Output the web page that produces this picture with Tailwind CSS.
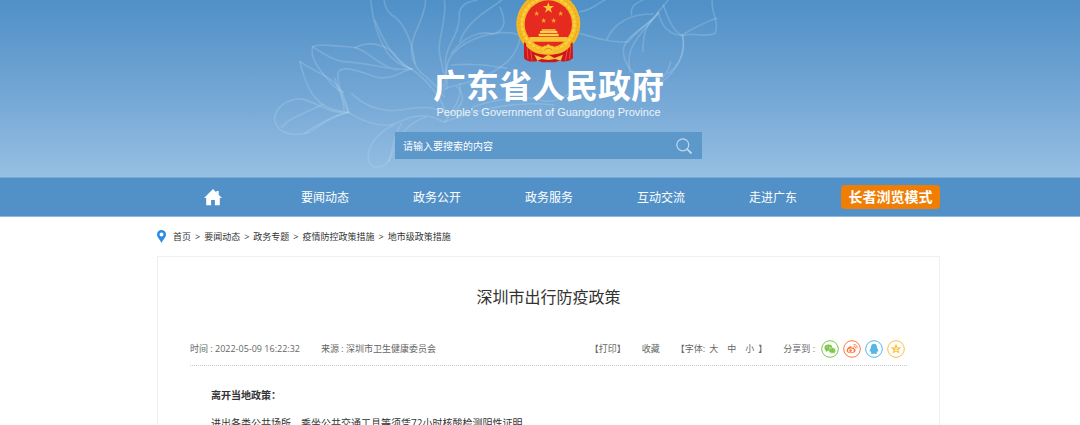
<!DOCTYPE html>
<html lang="zh-CN">
<head>
  <meta charset="UTF-8" />
  <meta name="viewport" content="width=device-width, initial-scale=1.0"/>
  <title>深圳市出行防疫政策</title>
  <script src="https://cdn.jsdelivr.net/npm/@tailwindcss/browser@4"></script>
</head>
<body class="bg-white text-[#444] font-['Open_Sans','Noto_Sans_CJK_SC',sans-serif]">

  <!-- Header -->
  <header class="relative overflow-hidden bg-linear-to-b from-[#4f90c7] via-[#71a5d4] to-[#96bfe3] border-b border-[#78aad6] pl-[17px]">
    <!-- Flower line drawing -->
    <svg class="absolute top-0 left-1/2 -ml-[280px] w-[460px] h-[178px]" viewBox="0 0 1380 534" fill="none" stroke="#b9d8f0" stroke-opacity=".26" stroke-width="5" stroke-linecap="round" aria-hidden="true">
      <path d="M332 0C338 70 355 115 380 155C400 185 425 198 455 207"/>
      <path d="M345 62C370 120 400 180 447 205"/>
      <path d="M372 0C375 25 390 45 410 55C440 85 458 140 465 190"/>
      <path d="M497 0C495 60 450 105 455 155C455 180 468 200 480 215C505 235 530 260 552 290"/>
      <path d="M553 0C562 55 535 110 538 150C540 185 550 205 556 235"/>
      <path d="M652 0C620 5 595 20 598 50C600 95 565 130 558 170C552 205 565 225 560 265"/>
      <path d="M725 0C695 25 620 60 600 125"/>
      <path d="M720 22C735 55 742 90 700 102C660 90 610 110 575 160"/>
      <path d="M780 105C720 85 620 110 575 165C555 190 560 225 552 260"/>
      <path d="M780 115C770 170 730 205 660 235C610 255 570 255 550 270"/>
      <path d="M575 195C640 190 680 195 740 205"/>
      <path d="M455 207C400 215 340 190 250 185C215 180 180 155 158 140C175 128 250 140 285 143C330 155 350 195 410 210"/>
      <path d="M285 143C330 120 385 135 410 170C425 190 440 200 455 207"/>
      <path d="M158 140C150 170 170 200 205 240C220 262 235 270 250 277"/>
      <path d="M120 185C130 230 150 290 190 315C215 330 240 335 265 337"/>
      <path d="M120 185C160 215 215 225 245 275C255 300 262 315 265 337"/>
      <path d="M225 235C230 265 250 285 252 330"/>
      <path d="M265 337C240 280 230 240 235 215C255 195 300 215 350 232C400 240 425 212 455 207"/>
      <path d="M265 337C200 345 150 290 110 297C65 305 38 335 45 365C58 405 105 408 145 398C175 385 210 345 265 337"/>
      <path d="M65 382C90 350 150 335 190 312"/>
      <path d="M265 337C230 345 165 375 135 400"/>
      <path d="M265 337C310 365 350 380 390 375C435 365 440 345 500 348C530 350 545 368 555 365"/>
      <path d="M275 280C310 315 350 330 395 332C450 330 500 310 545 335"/>
      <path d="M455 207C500 240 545 290 560 345"/>
      <path d="M400 375C350 400 320 440 325 480C335 510 365 505 385 485C415 440 410 380 500 350"/>
      <path d="M425 370C400 405 400 450 385 485"/>
      <path d="M590 260C620 285 610 315 575 340C565 350 562 358 555 365"/>
      <path d="M600 250C605 290 590 320 560 350"/>
      <path d="M640 320C700 300 780 285 840 300C870 310 900 300 930 280"/>
      <path d="M555 365C660 330 760 300 880 315"/>
      <path d="M960 100C1010 115 1060 130 1105 125C1130 90 1180 65 1195 35C1210 20 1215 10 1225 0"/>
      <path d="M960 35C1000 30 1010 10 1035 0"/>
      <path d="M1040 118C1060 75 1105 40 1180 42"/>
      <path d="M1115 45C1110 20 1125 10 1150 0"/>
      <path d="M1195 38C1165 80 1095 105 1090 150C1090 185 1110 210 1135 235"/>
      <path d="M1195 38C1160 90 1090 130 1110 215"/>
      <path d="M1195 38C1205 80 1230 105 1268 107C1280 160 1250 215 1200 250"/>
      <path d="M1268 107C1275 150 1265 190 1225 220"/>
      <path d="M1210 15C1225 60 1240 95 1268 107C1300 95 1340 115 1365 100C1380 70 1350 30 1357 0"/>
      <path d="M1370 55C1340 65 1300 85 1265 105"/>
      <path d="M1175 60C1150 90 1150 120 1148 155"/>
      <path d="M1232 185C1225 215 1215 230 1190 250"/>
    </svg>

    <div class="relative flex flex-col items-center pb-[18px]">
      <!-- National emblem -->
      <svg class="w-[66px] h-[63px]" viewBox="30 0 198 189" aria-hidden="true">
        <circle cx="127" cy="72" r="96" fill="#f3b824"/>
        <circle cx="127" cy="72" r="88" fill="none" stroke="#e9a91d" stroke-width="4" stroke-dasharray="5 6"/>
        <circle cx="127" cy="72" r="79" fill="none" stroke="#fbd042" stroke-width="7" stroke-dasharray="11 4"/>
        <circle cx="127" cy="72" r="71" fill="#e62a20"/>
        <path d="M54 126C75 142 90 152 105 158L150 158C168 152 182 142 200 126L201 174C190 186 170 186 160 182L147 187H108L95 182C82 187 62 186 54 174Z" fill="#cc1720"/>
        <path d="M63 140L66 178M74 147L78 182M185 145L178 182M194 138L191 177" stroke="#f04a3a" stroke-width="3"/>
        <path d="M71 111H184L187 125H68Z" fill="#f8c537"/>
        <path d="M98 101H158V109H98ZM102 93H154V99H102ZM107 88H149V92H107Z" fill="#fbd04a"/>
        <path d="M62 128C85 146 108 150 127 150S170 146 192 128L194 137C178 158 155 164 127 164S78 158 60 137Z" fill="#f6bd26"/>
        <path d="M108 144L114 137H120L127 132L134 137H140L146 144L142 158H112Z" fill="#f9c934"/>
        <path d="M115 152C118 143 136 143 139 152" fill="none" stroke="#d9921a" stroke-width="3"/>
        <path d="M85 164L110 174L127 164L145 174L171 164L164 182L148 177L127 180L106 177L94 182Z" fill="#f8c537"/>
        <path d="M127 6L131 18H144L134 26L138 38L127 31L117 38L121 26L111 18H123Z" fill="#fbc531"/>
        <g fill="#f4a52c">
          <path id="star" d="M92 32L94 38H100L95 42L97 48L92 44L87 48L89 42L84 38H90Z"/>
          <use href="#star" x="72"/>
          <use href="#star" x="21" y="21"/>
          <use href="#star" x="51" y="21"/>
        </g>
      </svg>
      <h1 class="mt-[5px] text-[33px] leading-9 font-bold text-white">广东省人民政府</h1>
      <p class="font-['Liberation_Sans',Arial,sans-serif] text-[11px] leading-4 text-white/85">People's Government of Guangdong Province</p>

      <!-- Search -->
      <form class="mt-3 flex h-[27px] w-[307px] items-center bg-[#5c98ca]" role="search">
        <input type="text" aria-label="搜索" placeholder="请输入要搜索的内容" class="h-full min-w-0 flex-1 bg-transparent pl-2 text-[10px] text-white placeholder:text-white outline-none">
        <button type="submit" aria-label="搜索" class="mr-2 p-0.5">
          <svg class="size-4" viewBox="0 0 16 16" fill="none" stroke="#bcd8ee" stroke-linecap="round">
            <circle cx="6.8" cy="6.8" r="6" stroke-width="1.2"/>
            <path d="M11.4 11.4L15 15" stroke-width="1.8"/>
          </svg>
        </button>
      </form>
    </div>
  </header>

  <!-- Main nav -->
  <nav class="bg-[#5291c7] border-b border-[#8db9df] pl-[17px]">
    <div class="mx-auto flex h-[38px] max-w-[783px] items-center text-xs leading-5 text-white">
      <a href="#" aria-label="首页" class="flex w-28 justify-center">
        <svg class="w-[18px] h-[17px]" viewBox="0 0 18 17" fill="#fff">
          <path d="M9 0L0 9H2.2V16.2H7.1V11H10.9V16.2H15.8V9H18L14.7 5.7V2H12.4V3.4Z"/>
        </svg>
      </a>
      <a href="#" class="w-28 pt-0.5 text-center">要闻动态</a>
      <a href="#" class="w-28 pt-0.5 text-center">政务公开</a>
      <a href="#" class="w-28 pt-0.5 text-center">政务服务</a>
      <a href="#" class="w-28 pt-0.5 text-center">互动交流</a>
      <a href="#" class="w-28 pt-0.5 text-center">走进广东</a>
      <button type="button" class="ml-auto h-6 w-[99px] rounded bg-[#f07e05] text-sm leading-6 font-bold whitespace-nowrap">长者浏览模式</button>
    </div>
  </nav>

  <div class="pl-[17px]">
    <div class="mx-auto max-w-[783px]">
      <!-- Breadcrumb -->
      <div class="flex h-[39px] items-center gap-1 text-[9px] text-[#333]">
        <svg class="mr-[3px] h-[13px] w-[9px]" viewBox="0 0 9 13" aria-hidden="true">
          <path d="M4.5 0A4.5 4.5 0 0 0 0 4.5C0 7.6 3 9.3 4.5 13C6 9.3 9 7.6 9 4.5A4.5 4.5 0 0 0 4.5 0ZM4.5 2.6A2 2 0 1 1 4.5 6.6A2 2 0 0 1 4.5 2.6Z" fill="#2a8ae6"/>
        </svg>
        <a href="#">首页</a>
        <span>&gt;</span>
        <a href="#">要闻动态</a>
        <span>&gt;</span>
        <a href="#">政务专题</a>
        <span>&gt;</span>
        <a href="#">疫情防控政策措施</a>
        <span>&gt;</span>
        <a href="#">地市级政策措施</a>
      </div>

      <!-- Article -->
      <article class="border border-[#f0f0f0] px-8">
        <h2 class="pt-7 text-center text-base text-[#333]">深圳市出行防疫政策</h2>

        <div class="mt-6 flex h-[33px] items-center border-b border-dotted border-[#ccc] text-[9px] text-[#666]">
          <span>时间 : 2022-05-09 16:22:32</span>
          <span class="ml-[21px]">来源 : 深圳市卫生健康委员会</span>

          <div class="ml-auto flex items-center pr-0.5">
            <button type="button">【打印】</button>
            <button type="button" class="ml-4">收藏</button>
            <span class="ml-4">【字体:</span>
            <button type="button" class="ml-1">大</button>
            <button type="button" class="ml-[9px]">中</button>
            <button type="button" class="ml-[9px]">小</button>
            <span class="ml-1">】</span>
            <span class="ml-4 mr-1.5">分享到 :</span>
            <div class="flex gap-1">
              <a href="#" aria-label="微信">
                <svg class="size-[18px]" viewBox="0 0 18 18">
                  <circle cx="9" cy="9" r="8.3" fill="#fff" stroke="#7bc549" stroke-width="1"/>
                  <ellipse cx="7.4" cy="7.8" rx="3.9" ry="3.3" fill="#7bc549"/>
                  <path d="M5 10L4.7 12L7 10.8Z" fill="#7bc549"/>
                  <ellipse cx="11.2" cy="10.4" rx="3.4" ry="2.8" fill="#7bc549" stroke="#fff" stroke-width=".5"/>
                  <path d="M12 12.6L13.7 13.7L13.3 12Z" fill="#7bc549"/>
                  <g fill="#fff"><circle cx="6.1" cy="7" r=".5"/><circle cx="8.7" cy="7" r=".5"/><circle cx="10.2" cy="9.8" r=".4"/><circle cx="12.3" cy="9.8" r=".4"/></g>
                </svg>
              </a>
              <a href="#" aria-label="微博">
                <svg class="size-[18px]" viewBox="0 0 18 18" fill="none">
                  <circle cx="9" cy="9" r="8.3" fill="#fff" stroke="#ff763b" stroke-width="1"/>
                  <path d="M7.4 6.2C5.6 6.5 3.6 8.8 3.6 10.4C3.6 12 5.6 13.2 8 13.2C10.8 13.2 12.7 11.7 12.7 10.3C12.7 9.4 12 9 11.3 8.8C11.6 7.7 10.6 7.2 8.7 8C8.9 7 8.5 6.1 7.4 6.2Z" fill="#ff763b"/>
                  <ellipse cx="7.9" cy="10.5" rx="2.9" ry="1.9" fill="#fff"/>
                  <circle cx="7.5" cy="10.6" r="1.3" fill="#ff763b"/>
                  <path d="M10.8 4.6C13 4.2 14.6 6 14 8M11 6.4C12.1 6.2 12.8 7 12.5 7.9" stroke="#ff763b" stroke-width=".9" stroke-linecap="round"/>
                </svg>
              </a>
              <a href="#" aria-label="QQ">
                <svg class="size-[18px]" viewBox="0 0 18 18">
                  <circle cx="9" cy="9" r="8.3" fill="#fff" stroke="#56b6e7" stroke-width="1"/>
                  <path d="M9 3.8C7 3.8 6 5.2 6 7C6 8.3 4.6 9.4 4.6 11.2C4.7 12 5.2 11.6 5.6 11C5.8 11.7 6.1 12.2 6.5 12.6C5.6 13 5.8 13.9 7 13.9C8 13.9 8.6 13.6 9 13.4C9.4 13.6 10 13.9 11 13.9C12.2 13.9 12.4 13 11.5 12.6C11.9 12.2 12.2 11.7 12.4 11C12.8 11.6 13.3 12 13.4 11.2C13.4 9.4 12 8.3 12 7C12 5.2 11 3.8 9 3.8Z" fill="#56b6e7"/>
                </svg>
              </a>
              <a href="#" aria-label="QQ空间">
                <svg class="size-[18px]" viewBox="0 0 18 18">
                  <circle cx="9" cy="9" r="8.3" fill="#fff" stroke="#fdbe3d" stroke-width="1"/>
                  <path d="M9 3.7L10.5 7.2L14.2 7.5L11.4 9.9L12.3 13.6L9 11.6L5.7 13.6L6.6 9.9L3.8 7.5L7.5 7.2Z" fill="#fdbe3d"/>
                  <path d="M7 8.2H10.8L7.8 10.5H10.8" fill="none" stroke="#fff" stroke-width=".7"/>
                </svg>
              </a>
            </div>
          </div>
        </div>

        <div class="px-[21px] pt-[15px] pb-8 text-[10px] leading-7 text-[#333]">
          <p class="font-bold">离开当地政策：</p>
          <p>进出各类公共场所、乘坐公共交通工具等须凭72小时核酸检测阴性证明</p>
        </div>
      </article>
    </div>
  </div>
</body>
</html>
